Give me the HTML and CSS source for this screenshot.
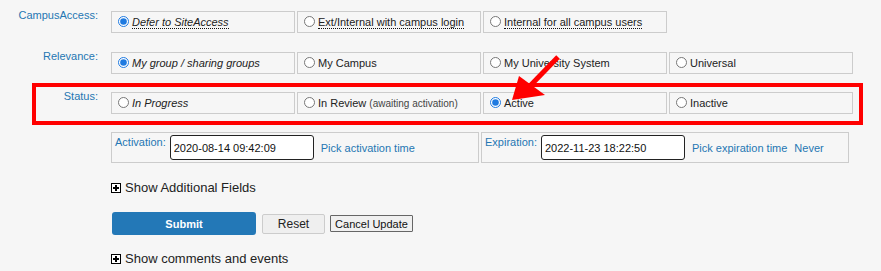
FILE: index.html
```html
<!DOCTYPE html>
<html>
<head>
  <title>Edit Entry</title>
  <meta name="viewport" content="width=device-width, initial-scale=1.0">
  <link rel="stylesheet" href="styles.css">
</head>
<body>
  <div class="form">
    <div class="row first">
      <div class="label">CampusAccess:</div>
      <div class="opts">
        <label class="opt"><input type="radio" name="access" checked><span class="hint em">Defer to SiteAccess</span></label>
        <label class="opt"><input type="radio" name="access"><span class="hint">Ext/Internal with campus login</span></label>
        <label class="opt"><input type="radio" name="access"><span class="hint">Internal for all campus users</span></label>
      </div>
    </div>

    <div class="row">
      <div class="label">Relevance:</div>
      <div class="opts">
        <label class="opt"><input type="radio" name="relevance" checked><span class="em">My group / sharing groups</span></label>
        <label class="opt"><input type="radio" name="relevance"><span>My Campus</span></label>
        <label class="opt"><input type="radio" name="relevance"><span>My University System</span></label>
        <label class="opt"><input type="radio" name="relevance"><span>Universal</span></label>
      </div>
    </div>

    <div class="row">
      <div class="label">Status:</div>
      <div class="opts">
        <label class="opt"><input type="radio" name="status"><span class="em">In Progress</span></label>
        <label class="opt"><input type="radio" name="status"><span>In Review <small class="note">(awaiting activation)</small></span></label>
        <label class="opt"><input type="radio" name="status" checked><span>Active</span></label>
        <label class="opt"><input type="radio" name="status"><span>Inactive</span></label>
      </div>
    </div>

    <div class="dates">
      <div class="datebox">
        <span class="label-inline">Activation:</span>
        <input class="when" type="text" value="2020-08-14 09:42:09">
        <a class="link" href="#">Pick activation time</a>
      </div>
      <div class="datebox">
        <span class="label-inline">Expiration:</span>
        <input class="when" type="text" value="2022-11-23 18:22:50">
        <a class="link" href="#">Pick expiration time</a>
        <a class="link" href="#">Never</a>
      </div>
    </div>

    <div class="toggle more"><span class="plus"></span>Show Additional Fields</div>

    <div class="actions">
      <button class="submit">Submit</button>
      <button class="reset">Reset</button>
      <button class="cancel">Cancel Update</button>
    </div>

    <div class="toggle comments"><span class="plus"></span>Show comments and events</div>
  </div>

  <!-- screenshot annotation -->
  <svg class="annot" width="881" height="271" viewBox="0 0 881 271">
    <rect x="34" y="85" width="827" height="38" fill="none" stroke="#ff0000" stroke-width="4"/>
    <line x1="558" y1="57" x2="528" y2="88" stroke="#ff0000" stroke-width="5"/>
    <polygon points="512,100 519,76 545,95" fill="#ff0000"/>
  </svg>
</body>
</html>
```

FILE: styles.css
```css
body {
  margin: 0;
  padding: 0;
  background-color: #f6f6f6;
  font-family: "Liberation Sans", Arial, sans-serif;
  font-size: 11px;
  color: #222;
  position: relative;
  width: 881px;
  height: 271px;
  overflow: hidden;
}
.form {
  padding-top: 11px;
}
.row {
  display: flex;
  align-items: flex-start;
  margin-bottom: 18px;
}
.row.first {
  margin-bottom: 19px;
}
.label {
  width: 98px;
  margin-right: 13px;
  text-align: right;
  color: #2576b3;
  line-height: 13px;
  margin-top: -2px;
}
.opts {
  display: flex;
  gap: 2px;
}
.opt {
  width: 184px;
  height: 22px;
  box-sizing: border-box;
  border: 1px solid #cccccc;
  display: flex;
  align-items: center;
}
.opt input {
  width: 11px;
  height: 11px;
  margin: 0 3px 2px 6px;
  accent-color: #1f7ae0;
}
.em {
  font-style: italic;
}
.hint {
  border-bottom: 1px dotted #111;
}
.note {
  font-size: 10px;
  color: #444;
}
.dates {
  display: flex;
  gap: 2px;
  margin-left: 111px;
}
.datebox {
  width: 368px;
  height: 31px;
  box-sizing: border-box;
  border: 1px solid #cccccc;
  padding: 2px 3px;
  display: flex;
  align-items: flex-start;
}
.label-inline {
  color: #2576b3;
  line-height: 13px;
  margin-top: 1px;
  margin-right: 4px;
}
.when {
  width: 144px;
  height: 25px;
  box-sizing: border-box;
  border: 1px solid #222;
  border-radius: 3px;
  padding: 0 3px;
  font-family: "Liberation Sans", Arial, sans-serif;
  font-size: 11px;
  color: #111;
  background: #fff;
  margin: 0;
}
.link {
  color: #2576b3;
  text-decoration: none;
  align-self: center;
  margin-left: 7px;
}
.toggle {
  margin-left: 111px;
  font-size: 13px;
  line-height: 16px;
  color: #222;
  display: flex;
  align-items: center;
}
.toggle.more {
  margin-top: 17px;
}
.toggle.comments {
  margin-top: 16px;
}
.plus {
  width: 10px;
  height: 10px;
  box-sizing: border-box;
  border: 1px solid #000;
  margin-right: 4px;
  position: relative;
  background: #fff;
}
.plus::before {
  content: "";
  position: absolute;
  left: 1px;
  top: 3px;
  width: 6px;
  height: 2px;
  background: #000;
}
.plus::after {
  content: "";
  position: absolute;
  left: 3px;
  top: 1px;
  width: 2px;
  height: 6px;
  background: #000;
}
.actions {
  margin-left: 112px;
  margin-top: 16px;
  display: flex;
  align-items: center;
}
button {
  font-family: "Liberation Sans", Arial, sans-serif;
  padding: 0;
  cursor: pointer;
}
.submit {
  width: 144px;
  height: 23px;
  border: none;
  border-radius: 3px;
  background-color: #2378b7;
  color: white;
  font-weight: bold;
  font-size: 11px;
  margin-right: 6px;
}
.reset {
  width: 63px;
  height: 20px;
  border: 1px solid #cccccc;
  border-radius: 2px;
  background-color: #efefef;
  color: #222;
  font-size: 12px;
  margin-right: 5px;
}
.cancel {
  width: 83px;
  height: 17px;
  border: 1px solid #666;
  border-radius: 1px;
  background-color: #f0f0f0;
  color: #111;
  font-size: 11px;
}
.annot {
  position: absolute;
  left: 0;
  top: 0;
  pointer-events: none;
}
```
